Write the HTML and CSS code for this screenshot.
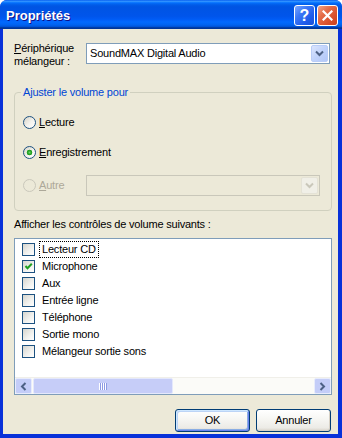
FILE: index.html
```html
<!DOCTYPE html>
<html lang="fr">
<head>
<meta charset="utf-8">
<title>Propriétés</title>
<link rel="stylesheet" href="styles.css">
</head>
<body>
<div class="window">
  <div class="titlebar">
    <span class="title">Propriétés</span>
    <div class="tb-buttons">
      <span class="tb-btn help">?</span>
      <span class="tb-btn close"><svg width="11" height="11" viewBox="0 0 11 11"><path d="M1.5 1.5 L9.5 9.5 M9.5 1.5 L1.5 9.5" stroke="#fff" stroke-width="2.2" stroke-linecap="square" fill="none"/></svg></span>
    </div>
  </div>
  <div class="frame">
    <div class="client">
      <div class="device-row">
        <div class="device-label"><u>P</u>ériphérique<br>mélangeur :</div>
        <div class="combo">
          <span class="combo-text">SoundMAX Digital Audio</span>
          <span class="combo-btn"><svg width="9" height="7" viewBox="0 0 9 7"><path d="M1 1.5 L4.5 5 L8 1.5" stroke="#4d6185" stroke-width="2" fill="none"/></svg></span>
        </div>
      </div>

      <div class="group">
        <span class="legend">Ajuster le volume pour</span>
        <div class="radio-row">
          <div class="rchoice"><span class="radio"></span><span class="rlabel"><u>L</u>ecture</span></div>
        </div>
        <div class="radio-row second">
          <div class="rchoice"><span class="radio checked"></span><span class="rlabel"><u>E</u>nregistrement</span></div>
        </div>
        <div class="radio-row third">
          <div class="rchoice disabled"><span class="radio"></span><span class="rlabel"><u>A</u>utre</span></div>
          <div class="combo combo-disabled">
            <span class="combo-text"></span>
            <span class="combo-btn"><svg width="9" height="7" viewBox="0 0 9 7"><path d="M1 1.5 L4.5 5 L8 1.5" stroke="#c9c7ba" stroke-width="2" fill="none"/></svg></span>
          </div>
        </div>
      </div>

      <div class="list-label">Afficher les contrôles de volume suivants :</div>

      <div class="listbox">
        <div class="items">
          <div class="item"><span class="check"></span><span class="ilabel focus">Lecteur CD</span></div>
          <div class="item"><span class="check"><svg width="11" height="11" viewBox="0 0 11 11"><path d="M2.5 5 L4.5 7.2 L8.8 2.8" stroke="#21a121" stroke-width="2" fill="none"/></svg></span><span class="ilabel">Microphone</span></div>
          <div class="item"><span class="check"></span><span class="ilabel">Aux</span></div>
          <div class="item"><span class="check"></span><span class="ilabel">Entrée ligne</span></div>
          <div class="item"><span class="check"></span><span class="ilabel">Téléphone</span></div>
          <div class="item"><span class="check"></span><span class="ilabel">Sortie mono</span></div>
          <div class="item"><span class="check"></span><span class="ilabel">Mélangeur sortie sons</span></div>
        </div>
        <div class="hscroll">
          <span class="sb-btn"><svg width="7" height="9" viewBox="0 0 7 9"><path d="M5.5 1 L2 4.5 L5.5 8" stroke="#4d6185" stroke-width="2" fill="none"/></svg></span>
          <span class="sb-thumb"><span class="grip"></span></span>
          <span class="sb-track"></span>
          <span class="sb-btn"><svg width="7" height="9" viewBox="0 0 7 9"><path d="M1.5 1 L5 4.5 L1.5 8" stroke="#4d6185" stroke-width="2" fill="none"/></svg></span>
        </div>
      </div>

      <div class="buttons">
        <button class="btn default">OK</button>
        <button class="btn">Annuler</button>
      </div>
    </div>
  </div>
</div>
</body>
</html>
```

FILE: styles.css
```css
* { box-sizing: border-box; }
html, body { margin: 0; padding: 0; background: #ffffff; }
body {
  font-family: Tahoma, "Liberation Sans", Arial, sans-serif;
  font-size: 11px;
  line-height: 13px;
  letter-spacing: -0.2px;
  color: #000;
}
u { text-decoration: underline; text-underline-offset: 1px; }

.window {
  width: 342px;
  height: 438px;
  display: flex;
  flex-direction: column;
  border-radius: 7px 7px 0 0;
  overflow: hidden;
  background: #0831d9;
}

.titlebar {
  height: 29px;
  flex: none;
  display: flex;
  align-items: flex-start;
  justify-content: space-between;
  padding: 0 4px 0 6px;
  background: linear-gradient(to bottom, #0058ee 0%, #3593ff 4%, #288eff 6%, #127dff 8%, #036ffc 10%, #0262ee 14%, #0057e5 20%, #0054e3 24%, #0055eb 56%, #005bf5 66%, #026afe 76%, #0062ef 86%, #0052d6 92%, #0040ab 94%, #003092 100%);
}
.title {
  margin-top: 8px;
  font: bold 13px/16px "Liberation Sans", Arial, sans-serif;
  letter-spacing: 0;
  color: #fff;
  text-shadow: 1px 1px #0f1089;
}
.tb-buttons { display: flex; gap: 2px; margin-top: 5px; }
.tb-btn {
  width: 21px;
  height: 21px;
  border: 1px solid #fff;
  border-radius: 3px;
  display: flex;
  align-items: center;
  justify-content: center;
}
.help {
  background: linear-gradient(135deg, #7aa6ff 0%, #3d78f6 35%, #1f5ceb 70%, #1a50d6 100%);
  color: #fff;
  font: bold 16px/19px "Liberation Sans", Arial, sans-serif;
  letter-spacing: 0;
}
.close {
  background: linear-gradient(135deg, #f3a486 0%, #e46c48 35%, #d8502c 70%, #c8401e 100%);
}

.frame {
  flex: 1;
  display: flex;
  padding: 0 4px 4px 3px;
}
.client {
  flex: 1;
  background: #ece9d8;
  padding: 13px 6px 0 11px;
  display: flex;
  flex-direction: column;
}

.device-row { display: flex; align-items: flex-start; }
.device-label { width: 72px; }

.combo {
  width: 244px;
  height: 21px;
  margin-top: 1px;
  border: 1px solid #7f9db9;
  background: #fff;
  display: flex;
  align-items: center;
  padding: 0 1px 0 3px;
}
.combo-text { flex: 1; }
.combo-btn {
  width: 17px;
  height: 17px;
  border: 1px solid #b9cdf8;
  border-radius: 2px;
  background: linear-gradient(135deg, #dbe5fd 0%, #c1d3fb 50%, #b3c8f8 100%);
  display: flex;
  align-items: center;
  justify-content: center;
}

.group {
  position: relative;
  margin-top: 24px;
  border: 1px solid #d0d0bf;
  border-radius: 4px;
  padding: 19px 0 14px 8px;
}
.legend {
  position: absolute;
  top: -7px;
  left: 6px;
  padding: 0 2px;
  background: #ece9d8;
  color: #0046d5;
}
.radio-row { height: 21px; display: flex; align-items: center; }
.radio-row.second { margin-top: 9px; }
.radio-row.third { margin-top: 12px; }
.rchoice { width: 63px; display: flex; align-items: center; white-space: nowrap; }
.rlabel { margin-left: 3px; }
.radio {
  width: 13px;
  height: 13px;
  flex: none;
  border: 1px solid #1c5180;
  border-radius: 50%;
  background: linear-gradient(135deg, #d6d3c7 0%, #f4f3ee 55%, #ffffff 100%);
}
.radio.checked {
  background:
    radial-gradient(circle at 50% 50%, #6cd66c 0, #2aa82a 1.6px, #1e9a1e 2.6px, rgba(30,154,30,0) 3.1px),
    linear-gradient(135deg, #d6d3c7 0%, #f4f3ee 55%, #ffffff 100%);
}
.rchoice.disabled { color: #aca899; }
.rchoice.disabled .radio { border-color: #cac8bb; background: #ece9d8; }

.combo-disabled {
  width: 234px;
  margin-top: 0;
  border-color: #c9c7ba;
  background: #ece9d8;
}
.combo-disabled .combo-btn {
  border-color: #e4e2d6;
  background: #f0efe7;
}

.list-label { margin-top: 7px; }

.listbox {
  margin-top: 7px;
  height: 157px;
  border: 1px solid #7f9db9;
  background: #fff;
  display: flex;
  flex-direction: column;
}
.items { flex: 1; padding: 2px 0 0 7px; }
.item { height: 17px; display: flex; align-items: center; }
.check {
  width: 13px;
  height: 13px;
  flex: none;
  border: 1px solid #1c5180;
  background: linear-gradient(135deg, #d6d5ce 0%, #f2f2ef 60%, #ffffff 100%);
  display: flex;
}
.ilabel {
  margin-left: 4px;
  height: 17px;
  line-height: 15px;
  padding: 0 2px;
  border: 1px solid transparent;
  white-space: nowrap;
}
.ilabel.focus { border: 1px dotted #000; }

.hscroll {
  height: 17px;
  flex: none;
  display: flex;
  background: #fbfbf8;
  border-top: 1px solid #f0efe9;
}
.hscroll .sb-btn {
  width: 17px;
  height: 16px;
  flex: none;
  border: 1px solid #e8ecfc;
  border-radius: 2px;
  background: #c4cdf8;
  display: flex;
  align-items: center;
  justify-content: center;
}
.sb-thumb {
  width: 140px;
  margin-left: 1px;
  flex: none;
  border: 1px solid #e4e8fc;
  border-radius: 2px;
  background: #c6cdf8;
  display: flex;
  align-items: center;
  justify-content: center;
}
.grip {
  width: 8px;
  height: 7px;
  background: repeating-linear-gradient(to right, #ffffff 0 1px, #8e9be4 1px 2px);
}
.sb-track { flex: 1; }

.buttons {
  margin-top: 14px;
  display: flex;
  justify-content: flex-end;
  gap: 6px;
  padding-right: 1px;
}
.btn {
  width: 75px;
  height: 23px;
  padding: 0;
  font: 11px/13px Tahoma, "Liberation Sans", Arial, sans-serif;
  letter-spacing: -0.2px;
  color: #000;
  border: 1px solid #003c74;
  border-radius: 3px;
  background: linear-gradient(to bottom, #ffffff 0%, #f7f7f4 40%, #ecebe6 85%, #d6d0c5 100%);
  box-shadow: inset -1px -1px 0 #d8d2c6;
}
.btn.default {
  box-shadow: inset 1px 1px 0 #cee7ff, inset -1px -1px 0 #6982ee, inset 2px 2px 0 #bcd4f6, inset -2px -2px 0 #89ade4;
}
```
